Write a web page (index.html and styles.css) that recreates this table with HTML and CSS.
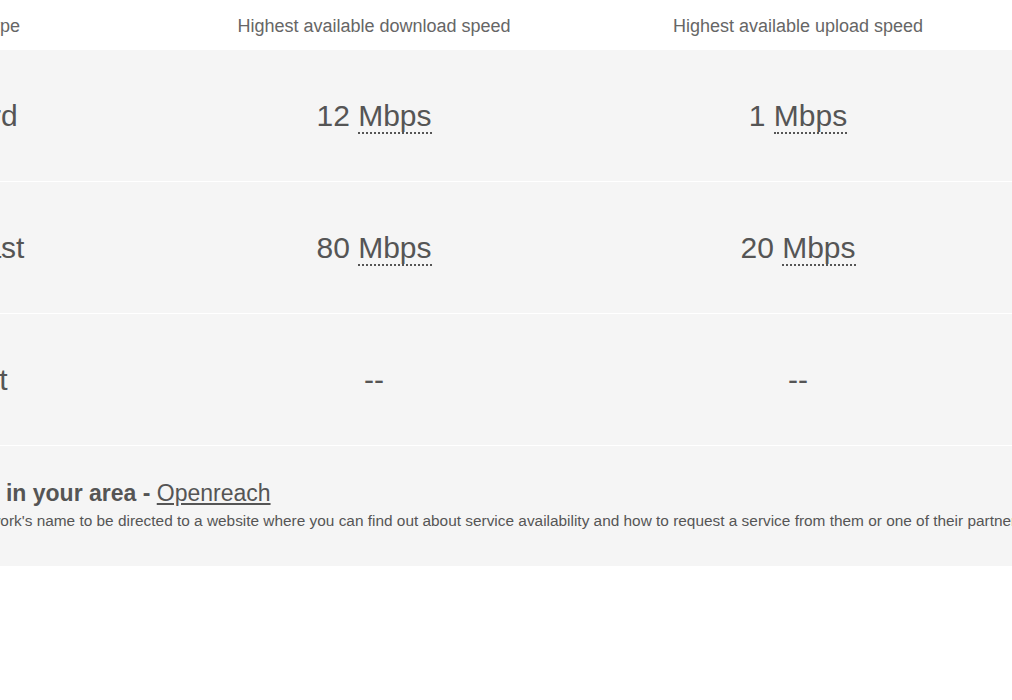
FILE: index.html
```html
<!DOCTYPE html>
<html lang="en">
<head>
<meta charset="utf-8">
<title>Broadband availability</title>
<link rel="stylesheet" href="styles.css">
</head>
<body>
<div class="page">
  <div class="speeds">
    <div class="row head">
      <div class="cell type">Broadband type</div>
      <div class="cell">Highest available download speed</div>
      <div class="cell">Highest available upload speed</div>
    </div>
    <div class="row">
      <div class="cell type">Standard</div>
      <div class="cell">12 <abbr class="unit" title="Megabits per second">Mbps</abbr></div>
      <div class="cell">1 <abbr class="unit" title="Megabits per second">Mbps</abbr></div>
    </div>
    <div class="row">
      <div class="cell type">Superfast</div>
      <div class="cell">80 <abbr class="unit" title="Megabits per second">Mbps</abbr></div>
      <div class="cell">20 <abbr class="unit" title="Megabits per second">Mbps</abbr></div>
    </div>
    <div class="row">
      <div class="cell type">Ultrafast</div>
      <div class="cell">--</div>
      <div class="cell">--</div>
    </div>
  </div>
  <div class="networks">
    <h2 class="networks-title">Networks in your area - <a class="network-link" href="#">Openreach</a></h2>
    <p class="networks-note">Click on a network's name to be directed to a website where you can find out about service availability and how to request a service from them or one of their partners.</p>
  </div>
</div>
</body>
</html>
```

FILE: styles.css
```css
html, body {
  margin: 0;
  padding: 0;
  background: #ffffff;
  overflow: hidden;
}

body {
  font-family: "Liberation Sans", Arial, sans-serif;
  color: #555555;
}

.page {
  margin-left: -104px;
  width: 1300px;
}

.speeds {
  display: flex;
  flex-direction: column;
}

.row {
  display: grid;
  grid-template-columns: 266px 424px 424px;
  align-items: center;
  height: 131px;
  background: #f5f5f5;
  border-bottom: 1px solid #ffffff;
  font-size: 30px;
  color: #555555;
}

.row.head {
  height: 48px;
  padding-top: 2px;
  background: #ffffff;
  border-bottom: 0;
  font-size: 18px;
  color: #666666;
}

.cell {
  text-align: center;
  white-space: nowrap;
}

.cell.type {
  text-align: left;
}

.row.head .cell.type {
  margin-left: -3px;
}

.unit {
  text-decoration: none;
  border-bottom: 2px dotted #555555;
}

.networks {
  background: #f5f5f5;
  height: 120px;
  padding-top: 33px;
  box-sizing: border-box;
}

.networks-title {
  margin: 0;
  font-size: 23px;
  font-weight: bold;
  color: #555555;
  line-height: 28px;
}

.network-link {
  font-weight: normal;
  color: #555555;
  text-decoration: underline;
}

.networks-note {
  margin: 5px 0 0;
  font-size: 15.4px;
  line-height: 18px;
  color: #555555;
  white-space: nowrap;
}
```
